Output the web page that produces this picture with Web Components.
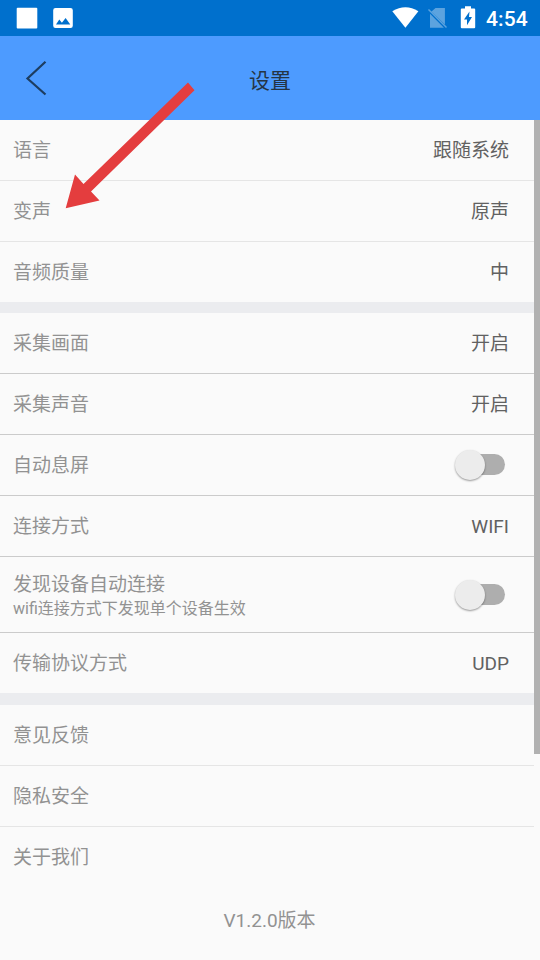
<!DOCTYPE html>
<html lang="zh-CN">
<head>
<meta charset="utf-8">
<title>设置</title>
<style>
body{margin:0;background:#fafafa;font-family:Roboto,"Noto Sans CJK SC",sans-serif;overflow:hidden}
</style>
</head>
<body>
<settings-screen></settings-screen>
<script>
const define = (name, html, setup) => customElements.define(name, class extends HTMLElement {
  connectedCallback() {
    if (this.shadowRoot) return;
    const t = document.createElement('template');
    t.innerHTML = html;
    this.attachShadow({mode: 'open'}).append(t.content.cloneNode(true));
    if (setup) setup(this, this.shadowRoot);
  }
});

define('status-bar', `
<style>
:host{display:flex;align-items:center;box-sizing:border-box;height:36px;background:#0070cd;color:#fff}
svg{display:block;flex:1}
time{font-size:21px;line-height:36px;font-weight:500;padding-top:1px;width:54px;letter-spacing:.1px}
</style>
<svg width="486" height="36" viewBox="0 0 486 36" fill="#fff">
  <rect x="16.7" y="7.7" width="20.6" height="20.8" rx="1"/>
  <path fill-rule="evenodd" d="M55.500 8h15a2.300 2.300 0 0 1 2.300 2.300v15.400a2.300 2.300 0 0 1-2.300 2.300h-15a2.300 2.300 0 0 1-2.300-2.300V10.300A2.300 2.300 0 0 1 55.500 8zM56 24.500h14.300l-4.700-6.500-3.700 4.700-2.600-3.200z"/>
  <path d="M392.300 11.300Q405.500 3 418.400 11.300L405.400 27.700Z"/>
  <path fill-opacity=".36" d="M435.500 8h9.400v16.500L431.500 11.500zM430 13.800 443.900 27.700H430z"/>
  <path d="M428.500 9.500 446.500 27.500" stroke="#fff" stroke-opacity=".36" stroke-width="1.500"/>
  <path fill-rule="evenodd" d="M465 6.200h6v2.200h3.200a1 1 0 0 1 1 1v17.800a1 1 0 0 1-1 1h-12.400a1 1 0 0 1-1-1V9.400a1 1 0 0 1 1-1H465zM469.500 11.500l-5.500 8h3v5.800l5-8.300h-3z"/>
</svg>
<time>4:54</time>`);

define('title-bar', `
<style>
:host{display:grid;grid-template-columns:90px 1fr 90px;align-items:center;height:84px;background:#4d9bff;color:#253545}
h1{margin:0;padding-top:5px;text-align:center;font-size:21px;font-weight:400;line-height:30px}
svg{display:block}
</style>
<svg width="90" height="84" fill="none" stroke="#1d3d60" stroke-width="2.200"><path d="M45.500 25.700 27.500 42.500 45.500 58.500"/></svg>
<h1><slot></slot></h1>`);

define('toggle-switch', `
<style>
:host{display:grid;align-items:center;justify-items:start;width:51px;height:34px}
i,b{grid-area:1/1;display:block}
i{justify-self:end;width:39px;height:21px;margin-bottom:1px;border-radius:11px;background:#aeaeae}
b{width:30px;height:30px;margin-left:1px;border-radius:50%;background:#ececec;box-shadow:0 1px 2px #0006}
</style><i></i><b></b>`);

define('settings-group', `
<style>
:host{display:block;--line:#e5e5e5}
:host([strong]){--line:#cbcbcb}
</style><slot></slot>`);

define('settings-row', `
<style>
:host{display:flex;align-items:center;justify-content:space-between;box-sizing:border-box;height:61px;padding:0 25px 0 13px;border-bottom:1px solid var(--line);color:#929292;font-size:19px;line-height:24px}
:host(:last-child){height:60px;border-bottom:0}
:host([tall]){height:76px}
.text{padding-top:2px}
:host([tall]) .text{padding-top:4px}
.name{display:block}
small{display:block;font-size:16px;line-height:24px}
.value{color:#616161}
.value ::slotted(span){display:block;padding-top:2px}
.value ::slotted(toggle-switch){margin-right:4px}
</style>
<div class="text"><span class="name"><slot></slot></span><small hidden></small></div>
<div class="value"><slot name="value"></slot></div>`, (host, root) => {
  const note = host.getAttribute('note');
  if (note) {
    const s = root.querySelector('small');
    s.hidden = false;
    s.textContent = note;
  } else root.querySelector('small').remove();
});

define('pointer-arrow', `
<style>:host{position:absolute;left:60px;top:78px;width:140px;height:136px;pointer-events:none}svg{display:block}</style>
<svg width="140" height="136" viewBox="60 78 140 136"><path fill="#e43d3e" d="M65.700 208.300 75 174.500 83.500 184 188 82.500 194.500 90.300 91 191.500 99.500 200.500Z"/></svg>`);

define('settings-screen', `
<style>
:host{display:block;position:relative;height:960px;overflow:hidden}
main{display:grid;grid-template-columns:534px 6px;align-items:start}
.gap{height:11px;background:#ebecef}
.gap.large{height:12px}
.bar{height:634px;background:#b1b1b1}
footer{margin-top:22px;width:539px;text-align:center;color:#929292;font-size:19px;line-height:24px}
</style>
<status-bar></status-bar>
<title-bar>设置</title-bar>
<main>
  <div>
    <settings-group>
      <settings-row>语言<span slot="value">跟随系统</span></settings-row>
      <settings-row>变声<span slot="value">原声</span></settings-row>
      <settings-row>音频质量<span slot="value">中</span></settings-row>
    </settings-group>
    <div class="gap"></div>
    <settings-group strong>
      <settings-row>采集画面<span slot="value">开启</span></settings-row>
      <settings-row>采集声音<span slot="value">开启</span></settings-row>
      <settings-row>自动息屏<toggle-switch slot="value"></toggle-switch></settings-row>
      <settings-row>连接方式<span slot="value">WIFI</span></settings-row>
      <settings-row tall note="wifi连接方式下发现单个设备生效">发现设备自动连接<toggle-switch slot="value"></toggle-switch></settings-row>
      <settings-row>传输协议方式<span slot="value">UDP</span></settings-row>
    </settings-group>
    <div class="gap large"></div>
    <settings-group>
      <settings-row>意见反馈</settings-row>
      <settings-row>隐私安全</settings-row>
      <settings-row>关于我们</settings-row>
    </settings-group>
    <footer>V1.2.0版本</footer>
  </div>
  <div class="bar"></div>
</main>
<pointer-arrow></pointer-arrow>`);
</script>
</body>
</html>
